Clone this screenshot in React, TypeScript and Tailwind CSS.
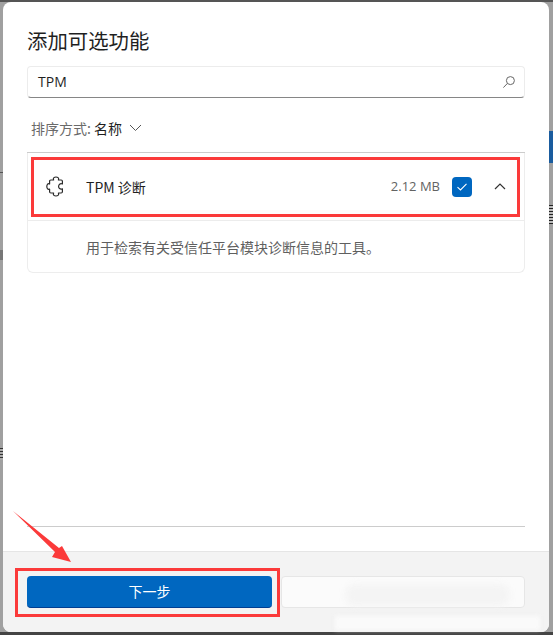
import React from "react";

const cjk = { fontFamily: '"Noto Sans CJK SC", sans-serif' };
const latin = { fontFamily: '"Open Sans", "Noto Sans CJK SC", sans-serif' };

function Puzzle() {
  return (
    <svg width="20" height="21" viewBox="0 0 20 21" fill="none" stroke="#2b2b2b" strokeWidth="1.2" strokeLinejoin="round">
      <path d="M7.6 4 C6.6 1.6 8.6 1 10 1 C11.4 1 13.4 1.6 12.4 4 L15.2 4 Q16.4 4 16.4 5.2 L16.4 8 C14 7 12.6 8.8 12.6 10.4 C12.6 12 14 13.8 16.4 12.8 L16.4 15.8 Q16.4 17 15.2 17 L12.4 17 C13.4 19.4 11.4 20 10 20 C8.6 20 6.6 19.4 7.6 17 L4.8 17 Q3.6 17 3.6 15.8 L3.6 13 C1.6 14 0.8 11.8 0.8 10.5 C0.8 9.2 1.6 7 3.6 8 L3.6 5.2 Q3.6 4 4.8 4 Z" />
    </svg>
  );
}

export default function App() {
  return (
    <div className="relative h-[635px] w-[553px] overflow-hidden bg-[#a0a0a0] pb-[3px] pl-[3px] pr-[4px] pt-[2px]" style={cjk}>
      <div className="flex h-[630px] w-[546px] flex-col overflow-hidden rounded-[8px] bg-white">
        <div className="flex flex-1 flex-col px-[24px]">
          <h1 className="mt-[24px] h-[28px] text-[20.4px] font-normal leading-[28px] text-[#1f1f1f]">添加可选功能</h1>
          <div className="mt-[12px] flex h-[32px] w-[498px] items-center justify-between rounded-[4px] border border-[#ececec] border-b-[#868686] bg-white pl-[10px] pr-[8px]">
            <span className="-mt-[1px] text-[14px] text-[#1f1f1f]" style={latin}>TPM</span>
            <svg width="14" height="14" viewBox="0 0 14 14" fill="none" stroke="#666" strokeWidth="1">
              <circle cx="8.4" cy="5.6" r="4" />
              <path d="M5.4 8.4 L1.4 12.6" />
            </svg>
          </div>
          <div className="mt-[20px] flex h-[20px] items-center pl-[4px] text-[14px]">
            <span className="text-[#6a6a6a]">排序方式:</span>
            <span className="ml-[3px] text-[#1f1f1f]">名称</span>
            <svg className="ml-[7px]" width="13" height="8" viewBox="0 0 13 8" fill="none" stroke="#555" strokeWidth="1">
              <path d="M1 1 L6.5 6.5 L12 1" />
            </svg>
          </div>
          <div className="mt-[14px] w-[498px] border-t border-[#cccccc]">
            <div className="rounded-b-[6px] border border-t-0 border-[#ededed]">
              <div className="flex h-[68px] items-center border-b border-[#ececec] pl-[18px] pr-[18px]">
                <Puzzle />
                <span className="ml-[20px] mt-[1px] text-[14px] text-[#1f1f1f]">TPM 诊断</span>
                <span className="ml-auto mt-[1px] text-[13px] text-[#636363]" style={latin}>2.12 MB</span>
                <span className="ml-[12px] flex h-[20px] w-[20px] items-center justify-center rounded-[4px] bg-[#0067c0]">
                  <svg width="12" height="10" viewBox="0 0 12 10" fill="none" stroke="#fff" strokeWidth="1.1">
                    <path d="M1.5 5.2 L4.5 8 L10.5 1.8" />
                  </svg>
                </span>
                <svg className="ml-[22px]" width="12" height="7" viewBox="0 0 12 7" fill="none" stroke="#333" strokeWidth="1.2">
                  <path d="M1 6 L6 1 L11 6" />
                </svg>
              </div>
              <div className="flex h-[51px] items-center pl-[58px] pt-[2px] text-[14px] text-[#5f5f5f]">用于检索有关受信任平台模块诊断信息的工具。</div>
            </div>
          </div>
          <div className="mb-[24px] mt-auto h-px w-[498px] bg-[#cccccc]" />
        </div>
        <div className="flex h-[81px] gap-[9px] border-t border-[#e5e5e5] bg-[#f3f3f3] px-[24px] pt-[24px]">
          <button className="flex h-[32px] w-[245px] items-center justify-center rounded-[4px] border-b border-[#003e92] bg-[#0067c0] text-[14px] text-white">下一步</button>
          <div className="h-[32px] w-[244px] rounded-[4px] border border-[#e6e6e6] bg-[#fbfbfb]" />
        </div>
      </div>

      {/* Dark window edges of the screenshot behind the dialog */}
      <div className="absolute left-0 right-0 top-0 h-[2px] bg-[#555555]" />
      <div className="absolute bottom-0 left-0 right-0 h-[3px] bg-[#444444]" />
      <div className="absolute right-0 top-[131px] h-[32px] w-[4px] bg-[#1a5c9e]" />
      <div className="absolute right-0 top-[205px] h-[19px] w-[4px] bg-[repeating-linear-gradient(#222_0,#222_1px,#bbb_1px,#bbb_3px)]" />
      <div className="absolute left-0 top-[448px] h-[12px] w-[3px] bg-[repeating-linear-gradient(#333_0,#333_1px,#aaa_1px,#aaa_3px)]" />
      <div className="absolute left-0 top-[172px] h-px w-[3px] bg-[#555555]" />
      <div className="absolute left-0 top-[250px] h-[10px] w-[3px] bg-[#777777]" />

      {/* Smudge painted over the cancel button */}
      <div className="absolute left-[345px] top-[584px] h-[22px] w-[165px] rounded-full bg-[#f4f4f4] blur-[3px]" />
      <div className="absolute left-[335px] top-[616px] h-[14px] w-[205px] bg-[#fafafa] blur-[2px]" />

      {/* Red annotations */}
      <div className="absolute left-[31px] top-[157px] h-[60px] w-[489px] border-[3px] border-[#fb3a3a]" />
      <div className="absolute left-[15px] top-[568px] h-[49px] w-[265px] border-[3px] border-[#fb3a3a]" />
      <svg className="absolute left-[12px] top-[510px]" width="60" height="55" viewBox="0 0 60 55">
        <path d="M1 1 L47 38 L50 36 L59 52 L40 47 L43 42 Z" fill="#fb3a3a" />
      </svg>
    </div>
  );
}
